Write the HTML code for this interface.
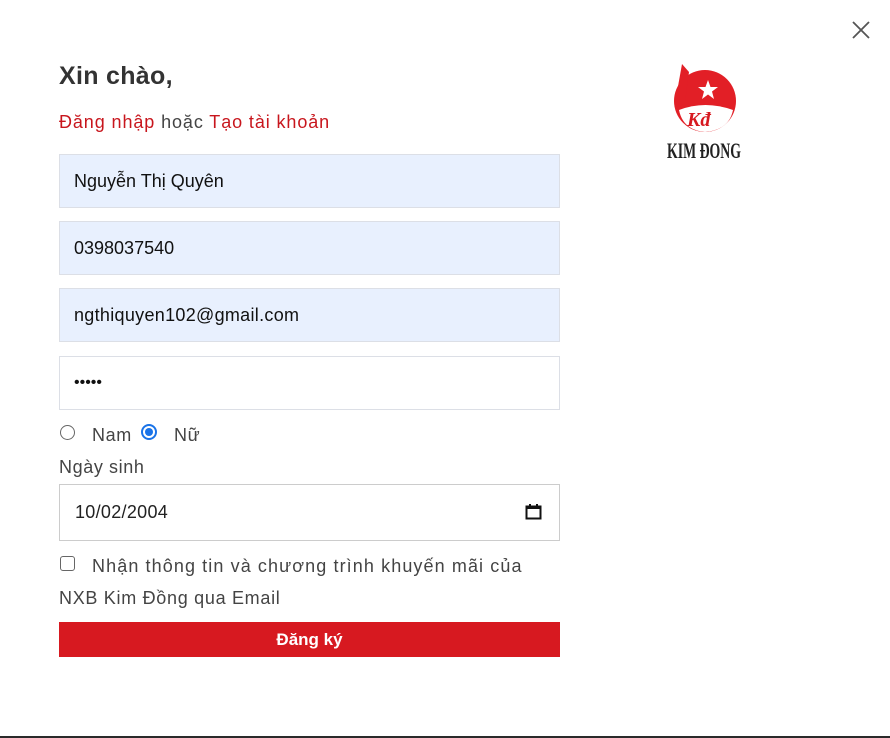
<!DOCTYPE html>
<html><head><meta charset="utf-8"><style>
*{box-sizing:border-box;margin:0;padding:0}
body{width:890px;height:738px;background:#fff;position:relative;overflow:hidden;font-family:"Liberation Sans",sans-serif;color:#333}
.a{position:absolute}
.inp{position:absolute;left:59px;width:501px;height:54px;background:#e8f0fe;border:1px solid #dcdfe6;font-size:18px;color:#111;padding-left:14px;line-height:52px}
.lbl{font-size:18px;color:#444;letter-spacing:0.6px}
</style></head><body>
<svg class="a" style="left:851px;top:20px" width="20" height="20" viewBox="0 0 20 20"><path d="M2 2L18 18M18 2L2 18" stroke="#555" stroke-width="1.8"/></svg>
<div class="a" style="left:59px;top:62px;font-size:25px;font-weight:bold;color:#333;letter-spacing:0.3px">Xin chào,</div>
<div class="a" style="left:59px;top:112px;font-size:18px;color:#444;letter-spacing:0.9px"><span style="color:#c8161d">Đăng nhập</span> hoặc <span style="color:#c8161d">Tạo tài khoản</span></div>
<div class="inp" style="top:154px">Nguyễn Thị Quyên</div>
<div class="inp" style="top:221px">0398037540</div>
<div class="inp" style="top:288px;letter-spacing:0.3px">ngthiquyen102@gmail.com</div>
<div class="inp" style="top:356px;background:#fff;font-size:16px;letter-spacing:0px">•••••</div>
<div class="a" style="left:60px;top:425px;width:15px;height:15px;border:1.5px solid #666;border-radius:50%"></div>
<div class="a lbl" style="left:92px;top:425px">Nam</div>
<div class="a" style="left:141px;top:424px;width:16px;height:16px;border:2px solid #1a73e8;border-radius:50%"><div style="margin:2px;width:8px;height:8px;background:#1a73e8;border-radius:50%"></div></div>
<div class="a lbl" style="left:174px;top:425px">Nữ</div>
<div class="a lbl" style="left:59px;top:457px">Ngày sinh</div>
<div class="inp" style="top:484px;height:57px;background:#fff;border-color:#ccc;line-height:55px;color:#222;padding-left:15px;letter-spacing:0.3px">10/02/2004</div>
<svg class="a" style="left:525px;top:503px" width="17" height="18" viewBox="0 0 17 18"><rect x="1.5" y="3.5" width="14" height="12" fill="none" stroke="#111" stroke-width="2"/><rect x="1.5" y="3" width="14" height="3" fill="#111"/><rect x="4" y="1" width="2" height="3" fill="#111"/><rect x="11" y="1" width="2" height="3" fill="#111"/></svg>
<div class="a" style="left:60px;top:556px;width:15px;height:15px;border:1.5px solid #666;border-radius:3px"></div>
<div class="a lbl" style="left:92px;top:556px;letter-spacing:1.1px">Nhận thông tin và chương trình khuyến mãi của</div>
<div class="a lbl" style="left:59px;top:588px;letter-spacing:0.7px">NXB Kim Đồng qua Email</div>
<div class="a" style="left:59px;top:622px;width:501px;height:35px;background:#d71920;color:#fff;font-weight:bold;font-size:17px;text-align:center;line-height:35px">Đăng ký</div>
<svg class="a" style="left:665px;top:62px" width="80" height="100" viewBox="0 0 80 100">
<circle cx="40" cy="39" r="31" fill="#e21f26"/>
<path d="M14 48 Q40 38 68 48 Q64 68 40 70 Q18 68 14 48Z" fill="#fff"/>
<path d="M17 2 L24 10 L20 40 L12 30Z" fill="#e21f26"/>
<polygon points="43,18 45.5,25 53,25 47,29.5 49,37 43,32.5 37,37 39,29.5 33,25 40.5,25" fill="#fff"/>
<text x="22" y="64" font-family="Liberation Serif" font-style="italic" font-size="20" fill="#d71920" font-weight="bold">Kđ</text>
<text x="2" y="96" font-family="Liberation Serif" font-size="22" fill="#222" font-weight="bold" textLength="74" lengthAdjust="spacingAndGlyphs">KIM ĐONG</text>
</svg>
<div class="a" style="left:0;top:736px;width:890px;height:2px;background:#2a2a2a"></div>
</body></html>
